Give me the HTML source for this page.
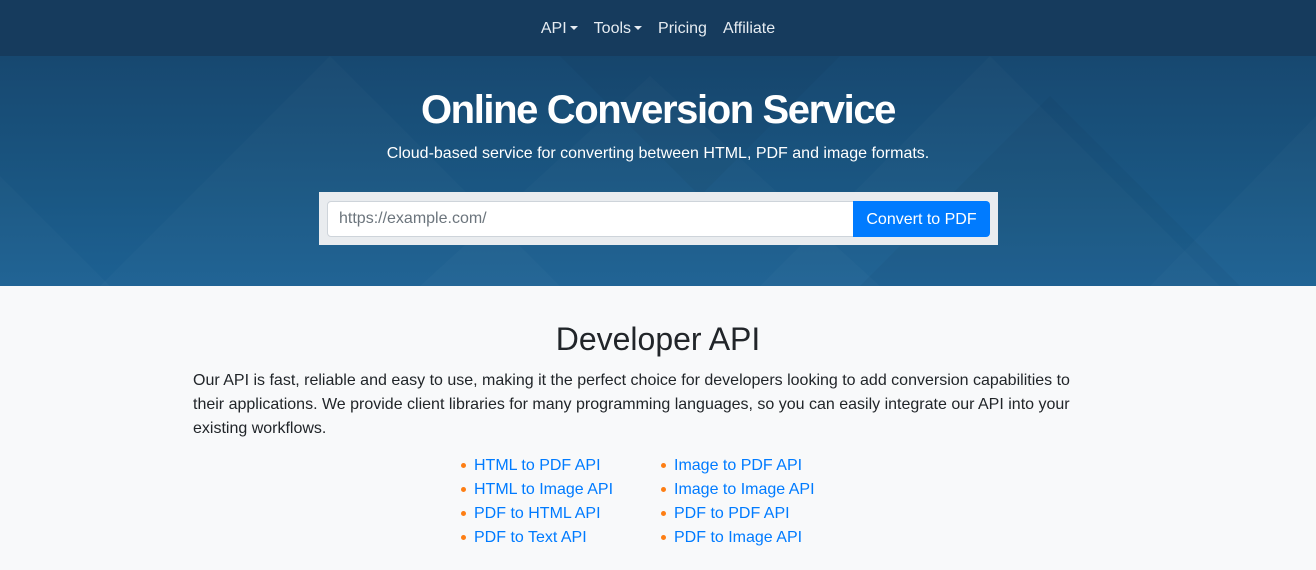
<!DOCTYPE html>
<html><head><meta charset="utf-8"><style>
*{margin:0;padding:0;box-sizing:border-box}
body{width:1316px;height:570px;overflow:hidden;background:#f8f9fa;font-family:"Liberation Sans",sans-serif;color:#212529}
.nav{height:56px;background:#163b5d;display:flex;justify-content:center;align-items:center;padding-top:2px}
.nav span{color:#e6ecf2;font-size:16px;margin:0 8px}
.car{display:inline-block;border-left:4px solid transparent;border-right:4px solid transparent;border-top:4px solid #e6ecf2;vertical-align:3px;margin-left:3px}
.hero{position:relative;height:230px;background:linear-gradient(180deg,#174870 0%,#1a5783 60%,#1d6193 100%);overflow:hidden;text-align:center;color:#fff}
.hero svg{position:absolute;left:0;top:0}
h1{position:relative;font-size:40px;font-weight:bold;padding-top:30px;line-height:48px;letter-spacing:-1.4px}
.sub{position:relative;font-size:16px;margin-top:11px}
.form{position:absolute;left:319px;top:136px;width:679px;height:53px;background:#e9ecef}
.inp{position:absolute;left:8px;top:9px;width:527px;height:36px;background:#fff;border:1px solid #ced4da;border-radius:4px 0 0 4px;color:#6c757d;font-size:16px;text-align:left;padding:8px 11px}
.btn{position:absolute;left:534px;top:9px;width:137px;height:36px;background:#007bff;border-radius:0 4px 4px 0;color:#fff;font-size:16px;line-height:37px}
h2{text-align:center;font-size:32px;font-weight:500;margin-top:33px;line-height:40px}
p{margin:10px 0 0 193px;width:912px;font-size:16px;line-height:24px}
.cols{position:absolute;top:454px;font-size:16px;line-height:24px;color:#007bff}
.cols div{position:relative}
.cols div:before{content:"";position:absolute;left:-13px;top:9px;width:5px;height:5px;border-radius:50%;background:#fd7e14}
</style></head><body>
<div class="nav"><span>API<i class="car"></i></span><span>Tools<i class="car"></i></span><span>Pricing</span><span>Affiliate</span></div>
<div class="hero">
<svg width="1316" height="230"><g fill="#fff" fill-opacity="0.02">
<polygon points="100,230 330,0 560,230"/><polygon points="420,230 650,20 880,230"/><polygon points="760,230 990,0 1220,230"/><polygon points="0,120 0,230 110,230"/><polygon points="1316,60 1316,230 1150,230"/></g>
<g fill="#000" fill-opacity="0.03"><polygon points="860,230 1050,40 1240,230"/><polygon points="560,0 700,140 840,0"/></g></svg>
<h1>Online Conversion Service</h1>
<div class="sub">Cloud-based service for converting between HTML, PDF and image formats.</div>
<div class="form"><div class="inp">https://example.com/</div><div class="btn">Convert to PDF</div></div>
</div>
<h2>Developer API</h2>
<p>Our API is fast, reliable and easy to use, making it the perfect choice for developers looking to add conversion capabilities to their applications. We provide client libraries for many programming languages, so you can easily integrate our API into your existing workflows.</p>
<div class="cols" style="left:474px"><div>HTML to PDF API</div><div>HTML to Image API</div><div>PDF to HTML API</div><div>PDF to Text API</div></div>
<div class="cols" style="left:674px"><div>Image to PDF API</div><div>Image to Image API</div><div>PDF to PDF API</div><div>PDF to Image API</div></div>
</body></html>
